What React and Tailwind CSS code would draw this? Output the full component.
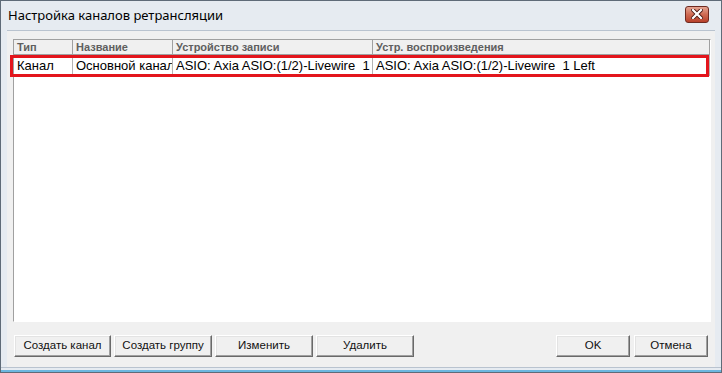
import React from "react";

// Column setup for the channel list
const columns = [
  { title: "Тип", width: "w-[59px]" },
  { title: "Название", width: "w-[100px]" },
  { title: "Устройство записи", width: "w-[200px]" },
  { title: "Устр. воспроизведения", width: "flex-1" },
];

const rows = [
  ["Канал", "Основной канал", "ASIO: Axia ASIO:(1/2)-Livewire  1", "ASIO: Axia ASIO:(1/2)-Livewire  1 Left"],
];

// Classic 3D button
const Button = ({ children, width }) => (
  <button
    className={`${width} h-[22px] bg-[#f0f0f0] border border-t-white border-l-white border-r-[#696969] border-b-[#696969] shadow-[inset_-1px_-1px_0_#a0a0a0,inset_1px_1px_0_#e3e3e3] text-[11.5px] text-[#111] leading-none font-['Liberation_Sans',Arial,sans-serif]`}
  >
    {children}
  </button>
);

const App = () => {
  return (
    <div className="w-[722px] h-[373px] flex flex-col bg-[#e6ebf1] border border-[#5f6b78] overflow-hidden">
      {/* Title bar */}
      <div className="h-[29px] flex items-center justify-between pl-[7px] pr-[12px]">
        <span className="text-[13px] text-black font-['Noto_Sans','Open_Sans',sans-serif]">
          Настройка каналов ретрансляции
        </span>
        <div className="w-[24px] h-[17px] -mt-[3px] rounded-[3px] border border-[#6e2a20] bg-gradient-to-b from-[#e3a492] via-[#cf6a52] to-[#b8402a] flex items-center justify-center">
          <svg width="12" height="10" viewBox="0 0 12 10">
            <path d="M2 1 L10 9 M10 1 L2 9" stroke="#4a1a14" strokeWidth="4" strokeLinecap="square" />
            <path d="M2 1 L10 9 M10 1 L2 9" stroke="#ffffff" strokeWidth="2.2" strokeLinecap="square" />
          </svg>
        </div>
      </div>

      {/* Client area */}
      <div className="mx-[6px] h-[337px] bg-[#f0f0f0] border-t border-[#b9c3cf] flex flex-col pt-[8px] pl-[6px] pr-[4px]">
        {/* List view */}
        <div className="relative h-[283px] bg-white border border-t-[#a0a0a0] border-l-[#a0a0a0] border-r-white border-b-white">
          <div className="flex h-[15px] bg-[#f0f0f0] border-b border-[#a0a0a0]">
            {columns.map((col) => (
              <div
                key={col.title}
                className={`${col.width} border-r border-[#a0a0a0] pl-[3px] text-[11px] font-bold text-[#5f5f5f] leading-[14px] whitespace-nowrap overflow-hidden font-['Liberation_Sans',Arial,sans-serif]`}
              >
                {col.title}
              </div>
            ))}
          </div>
          {rows.map((row, i) => (
            <div key={i} className="flex h-[21px] items-center">
              {row.map((cell, j) => (
                <div
                  key={j}
                  className={`${columns[j].width} h-full border-r border-[#b4b4b4] pl-[3px] text-[13px] text-black leading-[21px] whitespace-pre overflow-hidden font-['Liberation_Sans',Arial,sans-serif]`}
                >
                  {cell}
                </div>
              ))}
            </div>
          ))}
          {/* Red highlight annotation */}
          <div className="absolute left-[-4px] top-[15px] w-[699px] h-[22px] border-[3px] border-[#e3151c] pointer-events-none" />
        </div>

        {/* Buttons */}
        <div className="flex items-center mt-[13px] pl-[1px]">
          <div className="flex gap-[3px]">
            <Button width="w-[97px]">Создать канал</Button>
            <Button width="w-[98px]">Создать группу</Button>
            <Button width="w-[98px]">Изменить</Button>
            <Button width="w-[98px]">Удалить</Button>
          </div>
          <div className="flex gap-[4px] ml-auto mr-[3px]">
            <Button width="w-[74px]">OK</Button>
            <Button width="w-[74px]">Отмена</Button>
          </div>
        </div>
      </div>

      {/* Bottom frame */}
      <div className="flex-1 border-t border-[#b9c3cf] flex flex-col justify-end">
        <div className="h-[2px] bg-[#6cb6df]" />
      </div>
    </div>
  );
};

export default App;
